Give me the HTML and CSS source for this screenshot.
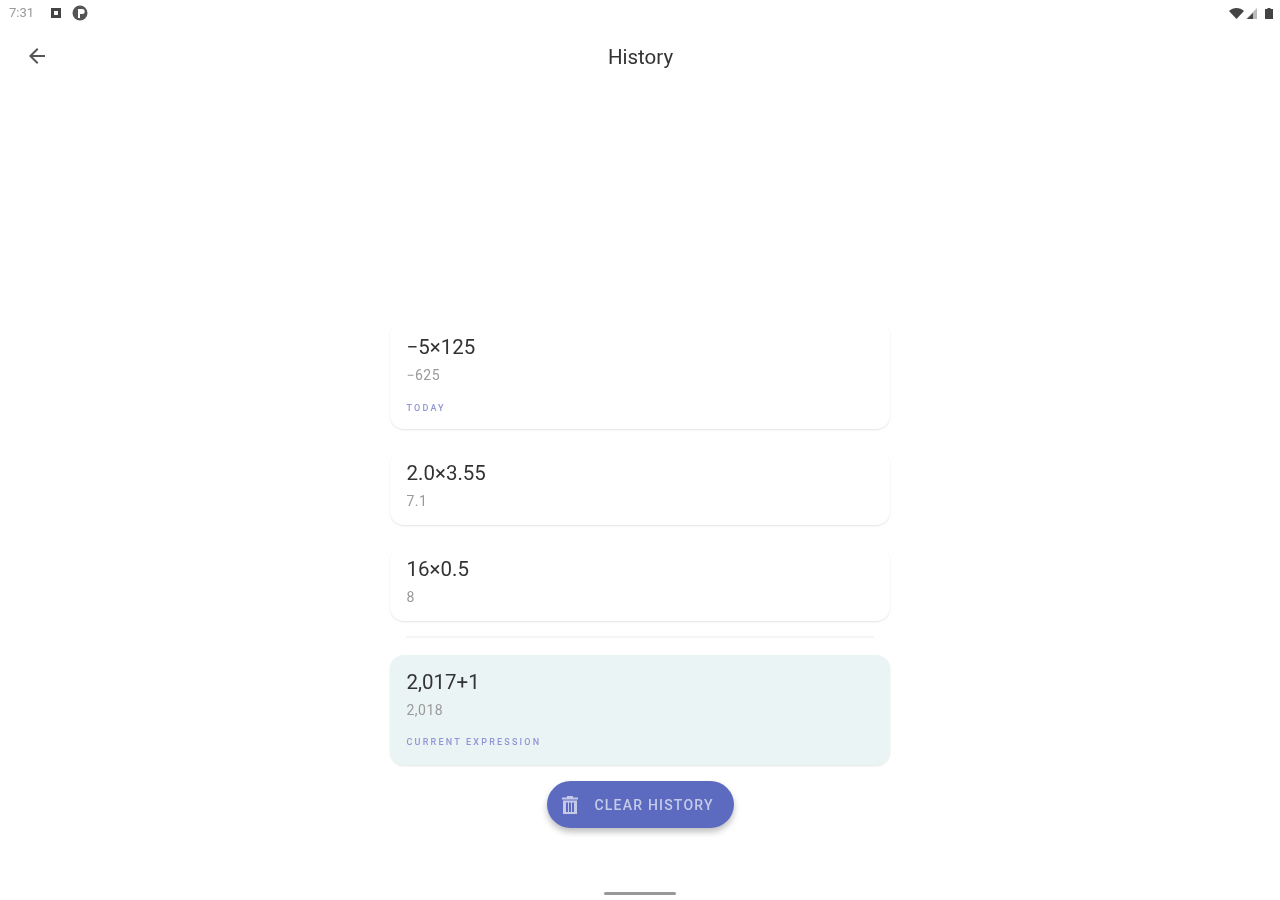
FILE: index.html
```html
<!DOCTYPE html>
<html lang="en">
<head>
    <meta charset="UTF-8">
    <title>History</title>
    <link rel="stylesheet" href="styles.css">
</head>
<body>
    <div class="status-bar">
        <div class="status-left">
            <span class="clock">7:31</span>
            <svg class="note-icon" width="12" height="12" viewBox="0 0 12 12"><path fill-rule="evenodd" d="M1 1h10v10H1z M4 4v4h4V4z" fill="#444"/></svg>
            <svg class="note-icon" width="16" height="16" viewBox="0 0 16 16"><circle cx="8" cy="8" r="7.5" fill="#555"/><path d="M6 13V4h4.2a2.4 2.4 0 0 1 0 5H8v4z" fill="#fff"/></svg>
        </div>
        <div class="status-right">
            <svg width="15" height="11" viewBox="0 0 15 11"><path d="M0 3l7.500 8 7.500-8C13 1 10 0 7.500 0S2 1 0 3z" fill="#444"/></svg>
            <svg class="signal" width="11" height="11" viewBox="0 0 11 11"><path d="M11 0v11H0z" fill="#bbb"/><path d="M7 5v6H1z" fill="#444"/></svg>
            <svg width="8" height="11" viewBox="0 0 8 11"><path d="M2.500 0h3v1H8v10H0V1h2.500z" fill="#444"/></svg>
        </div>
    </div>

    <header class="app-bar">
        <svg class="back-icon" width="24" height="24" viewBox="0 0 24 24"><path d="M20 11H7.830l5.590-5.590L12 4l-8 8 8 8 1.410-1.410L7.830 13H20z" fill="#555"/></svg>
        <h1>History</h1>
    </header>

    <main class="history">
        <div class="card first">
            <div class="expr">−5×125</div>
            <div class="result">−625</div>
            <div class="tag">Today</div>
        </div>
        <div class="card second">
            <div class="expr">2.0×3.55</div>
            <div class="result">7.1</div>
        </div>
        <div class="card third">
            <div class="expr">16×0.5</div>
            <div class="result">8</div>
        </div>
        <div class="divider"></div>
        <div class="card current">
            <div class="expr">2,017+1</div>
            <div class="result">2,018</div>
            <div class="tag">Current expression</div>
        </div>
        <button class="clear-btn">
            <svg width="16" height="18" viewBox="0 0 16 18"><path fill-rule="evenodd" d="M5 0h6v1.500h5v2H0v-2h5z M1 4.500h14V18H1z M4 6.500v9.500h2V6.500z M7 6.500v9.500h2V6.500z M10 6.500v9.500h2V6.500z" fill="#c5cae9"/></svg>
            <span>Clear history</span>
        </button>
    </main>

    <div class="home-bar"></div>
</body>
</html>
```

FILE: styles.css
```css
* {
    box-sizing: border-box;
}
body {
    margin: 0;
    height: 900px;
    overflow: hidden;
    background-color: #fff;
    font-family: Roboto, "Liberation Sans", sans-serif;
    color: #333;
    display: flex;
    flex-direction: column;
    filter: blur(0.6px);
}
.status-bar {
    height: 26px;
    padding: 0 7px 0 9px;
    display: flex;
    justify-content: space-between;
    align-items: center;
}
.status-left, .status-right {
    display: flex;
    align-items: center;
}
.status-right {
    gap: 2px;
}
.signal {
    margin-right: 6px;
}
.clock {
    padding-bottom: 2px;
    font-size: 13px;
    color: #999;
    width: 41px;
}
.note-icon {
    margin-right: 10px;
}
.app-bar {
    height: 60px;
    padding: 0 25px;
    display: grid;
    grid-template-columns: 1fr auto 1fr;
    align-items: center;
}
h1 {
    margin: 2px 0 0;
    padding-left: 1px;
    font-size: 20.500px;
    font-weight: 400;
    color: #333;
}
.history {
    width: 500px;
    margin: 0 auto;
    padding-top: 235px;
    display: flex;
    flex-direction: column;
    align-items: center;
}
.card {
    width: 100%;
    height: 75px;
    margin-bottom: 21px;
    padding: 11px 16px 0 16.500px;
    background-color: #fff;
    border-radius: 14px;
    box-shadow: 0 1px 2px rgba(0, 0, 0, 0.11);
}
.card.first {
    height: 108px;
    padding-top: 14px;
}
.card.third {
    margin-bottom: 15px;
}
.card.current {
    height: 110px;
    margin-bottom: 16px;
    padding-top: 15px;
    background-color: #ebf4f4;
}
.expr {
    font-size: 20.500px;
    line-height: 24px;
    color: #333;
}
.result {
    margin-top: 8px;
    font-size: 14px;
    line-height: 16px;
    letter-spacing: 0.5px;
    color: #999;
}
.tag {
    margin-top: 18px;
    font-size: 9px;
    line-height: 12px;
    font-weight: 500;
    letter-spacing: 2.200px;
    text-transform: uppercase;
    color: #8f96d6;
}
.first .tag {
    margin-top: 19px;
}
.divider {
    width: 468px;
    height: 2px;
    margin-bottom: 17px;
    background-color: #f5f5f5;
}
.clear-btn {
    width: 187px;
    height: 47px;
    padding: 0 0 0 15px;
    border: none;
    border-radius: 24px;
    background-color: #5c6bc0;
    box-shadow: 0 4px 6px rgba(0, 0, 0, 0.25);
    display: flex;
    align-items: center;
    gap: 17px;
    font-family: inherit;
    font-size: 14px;
    font-weight: 500;
    letter-spacing: 1.200px;
    text-transform: uppercase;
    color: #c5cae9;
}
.home-bar {
    width: 72px;
    height: 3px;
    margin: 64px auto 0;
    background-color: #999;
    border-radius: 2px;
}
```
